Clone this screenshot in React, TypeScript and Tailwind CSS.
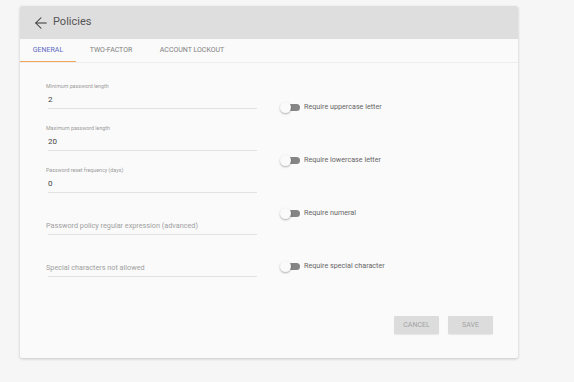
import { ArrowLeft } from "lucide-react";

const fields = [
  { label: "Minimum password length", value: "2" },
  { label: "Maximum password length", value: "20" },
  { label: "Password reset frequency (days)", value: "0" },
  { placeholder: "Password policy regular expression (advanced)" },
  { placeholder: "Special characters not allowed" },
];

const toggles = [
  "Require uppercase letter",
  "Require lowercase letter",
  "Require numeral",
  "Require special character",
];

function Toggle({ label }: { label: string }) {
  return (
    <div className="flex h-[20px] items-center">
      <div className="relative h-[12px] w-[22px]">
        <div className="absolute left-[8px] top-[3px] h-[7px] w-[12px] rounded-full bg-[#858585]" />
        <div className="absolute left-0 top-[1px] h-[11px] w-[11px] rounded-full bg-[#fafafa] shadow-[0_1px_2px_rgba(0,0,0,0.3)]" />
      </div>
      <span className="ml-[2px] text-[7.2px] text-[#666]">{label}</span>
    </div>
  );
}

export default function App() {
  return (
    <div className="min-h-[382px] bg-[#f6f6f6] pl-[20px] pt-[6px] font-['Roboto',sans-serif] antialiased">
      <div className="w-[498px] rounded-[2px] bg-[#fafafa] shadow-[0_1px_3px_rgba(0,0,0,0.2)]">
        <div className="flex h-[33px] items-center rounded-t-[2px] bg-[#dedede] pl-[12px]">
          <ArrowLeft size={18} strokeWidth={1.4} className="text-[#333]" />
          <span className="ml-[3px] text-[11px] text-[#555]">Policies</span>
        </div>

        <div className="flex h-[24px] border-b border-[#eee] text-[7px] uppercase">
          <div className="flex w-[56px] items-center justify-center border-b-[1.5px] border-[#f0a45c] text-[#5c6bc0]">
            General
          </div>
          <div className="flex w-[70px] items-center justify-center text-[#808080]">Two-Factor</div>
          <div className="flex w-[92px] items-center justify-center text-[#808080]">Account Lockout</div>
        </div>

        <div className="flex items-start pt-[4px]">
          <div className="ml-[28px] w-[209px]">
            {fields.map((f, i) => (
              <div key={i} className="flex h-[42px] flex-col justify-end border-b border-[#e2e2e2]">
                {f.label && (
                  <span className="-ml-[2px] text-[5.3px] leading-[8px] text-[#9a9a9a]">{f.label}</span>
                )}
                <span
                  className={
                    "mb-[1px] mt-[3px] h-[14px] leading-[14px] " +
                    (f.value ? "text-[8px] text-[#444]" : "-ml-[2px] text-[7.25px] text-[#a0a0a0]")
                  }
                >
                  {f.value ?? f.placeholder}
                </span>
              </div>
            ))}
          </div>

          <div className="ml-[23px] flex flex-col gap-[33px] pt-[30px]">
            {toggles.map((t) => (
              <Toggle key={t} label={t} />
            ))}
          </div>
        </div>

        <div className="flex justify-end gap-[9px] pb-[24px] pr-[25px] pt-[39px]">
          <button className="h-[18px] w-[45px] rounded-[1px] bg-[#dcdcdc] text-[7px] text-[#a3a3a3] shadow-[0_1px_1px_rgba(0,0,0,0.08)]">
            CANCEL
          </button>
          <button className="h-[18px] w-[45px] rounded-[1px] bg-[#dcdcdc] text-[7px] text-[#a3a3a3] shadow-[0_1px_1px_rgba(0,0,0,0.08)]">
            SAVE
          </button>
        </div>
      </div>
    </div>
  );
}
